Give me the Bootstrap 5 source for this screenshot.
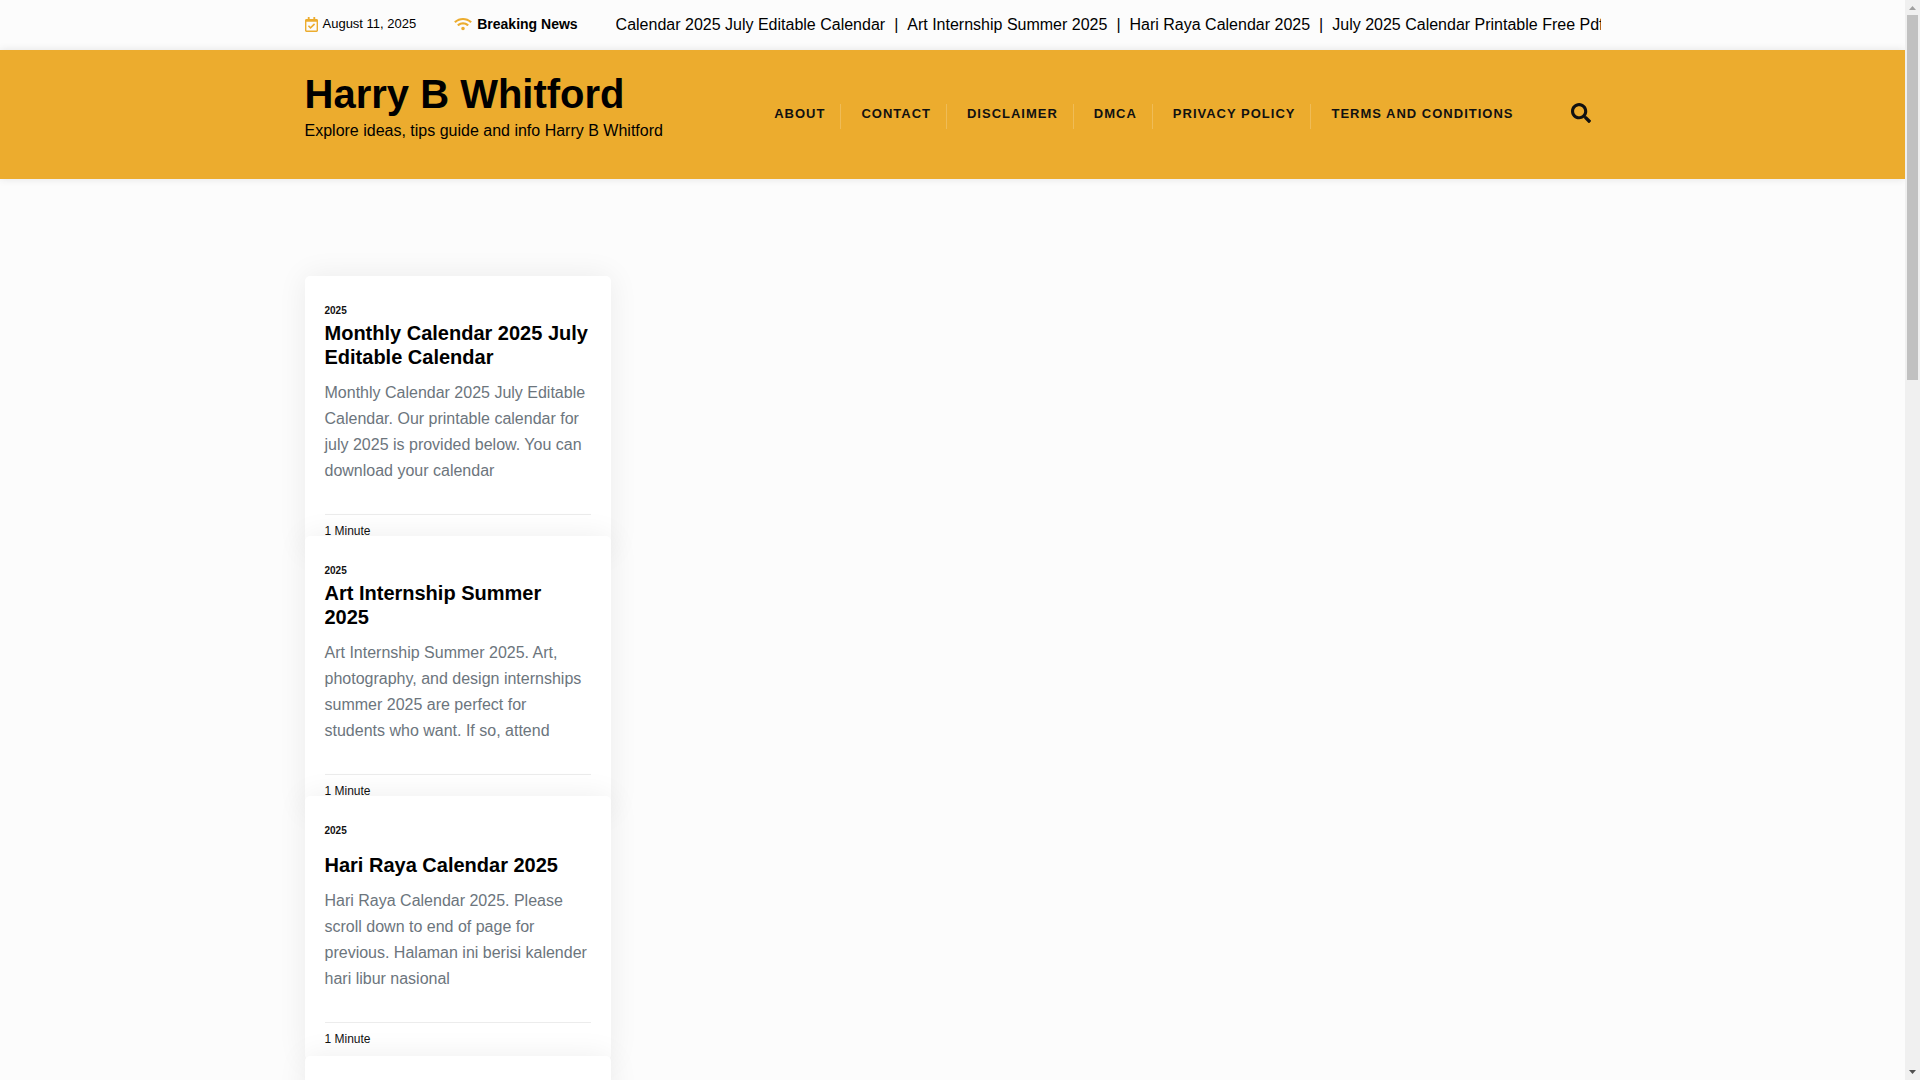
<!DOCTYPE html>
<html lang="en">
<head>
<meta charset="utf-8">
<meta name="viewport" content="width=device-width, initial-scale=1">
<title>Harry B Whitford</title>
<link href="https://cdn.jsdelivr.net/npm/bootstrap@5.3.0/dist/css/bootstrap.min.css" rel="stylesheet">
<style>
  :root { --brand: #ecac2e; }
  body { font-family: "Liberation Sans", Arial, sans-serif; font-size: 16px; color: #000; background: #fcfcfc; }
  a { color: inherit; text-decoration: none; }
  svg { display: block; fill: currentColor; flex: none; }
  .brand-color { color: var(--brand); }

  /* viewport: page on the left, scroll track on the right */
  .viewport { height: 100vh; overflow: hidden; }
  .page { min-width: 0; }
  .track { width: 15px; background: #f0f0f0; color: #505050; }
  .track .up { color: #a0a0a0; }
  .track .thumb { width: 11px; height: 33.8vh; background: #c1c1c1; }

  .topbar { height: 50px; }
  .date { font-size: 13px; line-height: 20px; gap: 5px; padding-bottom: 2px; }
  .breaking { font-size: 14px; line-height: 20px; gap: 5px; margin-left: 38px; padding-bottom: 2px; }
  .ticker { margin-left: 38px; min-width: 0; line-height: 24px; }
  .ticker a { margin-right: 9px; }
  .ticker a + a::before { content: "|"; margin-right: 9px; }

  .site-header { background: var(--brand); box-shadow: 0 0 8px rgba(0, 0, 0, .1); padding: 20px 0 35px; }
  .site-title { font-size: 40px; line-height: 48px; }
  .tagline { line-height: 26px; }
  .menu { gap: 20px; margin-right: 42px; padding-top: 34px; }
  .menu a { font-size: 13px; font-weight: 700; letter-spacing: 1px; line-height: 20px; color: #111; padding: 0 15px 5px 0; display: block; }
  .menu li:not(:last-child) { border-right: 1px solid rgba(255, 255, 255, .2); }
  .search { color: #111; padding: 33px 10px 0 0; }

  .posts { padding-top: 97px; }
  /* each slot is shorter than its card, so the next card laps over it */
  .slot { height: 260px; }
  .post { padding: 27px 20px 12px; min-height: 264px; border-radius: 5px; background: #fff; box-shadow: 0 0 30px rgba(0, 0, 0, .07); position: relative; }
  .cat { font-size: 10px; line-height: 16px; font-weight: 700; color: #111; }
  .post-title { font-size: 20px; line-height: 24px; min-height: 36px; margin: 2px 0 11px; }
  .excerpt { line-height: 26px; color: #6c757d; margin-bottom: 30px; }
  .meta { font-size: 12px; line-height: 18px; border-top: 1px solid #ececec; padding-top: 7px; color: #111; }
</style>
<script src="https://cdn.jsdelivr.net/npm/bootstrap@5.3.0/dist/js/bootstrap.bundle.min.js"></script>
</head>
<body>
<div class="viewport d-flex">
  <div class="page flex-grow-1">
    <div class="topbar">
      <div class="container d-flex align-items-center h-100">
        <div class="date d-flex align-items-center text-nowrap">
          <svg class="brand-color" width="13" height="15" viewBox="0 0 448 512" aria-hidden="true"><path d="M400 64h-48V12c0-6.627-5.373-12-12-12h-40c-6.627 0-12 5.373-12 12v52H160V12c0-6.627-5.373-12-12-12h-40c-6.627 0-12 5.373-12 12v52H48C21.49 64 0 85.49 0 112v352c0 26.51 21.49 48 48 48h352c26.51 0 48-21.49 48-48V112c0-26.51-21.49-48-48-48zm-6 400H54a6 6 0 0 1-6-6V160h352v298a6 6 0 0 1-6 6zm-52.849-200.65L198.842 404.519c-4.705 4.667-12.303 4.637-16.971-.068l-75.091-75.699c-4.667-4.705-4.637-12.303.068-16.971l22.719-22.536c4.705-4.667 12.303-4.637 16.97.069l44.104 44.461 111.072-110.181c4.705-4.667 12.303-4.637 16.971.068l22.536 22.718c4.667 4.705 4.636 12.303-.069 16.97z"/></svg>
          <span>August 11, 2025</span>
        </div>
        <div class="breaking d-flex align-items-center fw-bold text-nowrap">
          <svg class="brand-color" width="18" height="14" viewBox="0 0 640 512" aria-hidden="true"><path d="M634.91 154.88C457.74-8.99 182.19-8.93 5.09 154.88c-6.66 6.16-6.79 16.59-.35 22.98l34.24 33.97c6.14 6.1 16.02 6.23 22.4.38 145.92-133.68 371.3-133.71 517.25 0 6.38 5.85 16.26 5.71 22.4-.38l34.24-33.97c6.43-6.39 6.3-16.82-.36-22.98zM320 352c-35.35 0-64 28.65-64 64s28.65 64 64 64 64-28.65 64-64-28.65-64-64-64zm202.67-83.59c-115.26-101.93-290.21-101.82-405.34 0-6.9 6.1-7.12 16.69-.57 23.15l34.44 33.99c6 5.92 15.66 6.32 22.05.8 83.95-72.57 209.74-72.41 293.49 0 6.39 5.52 16.05 5.13 22.05-.8l34.44-33.99c6.56-6.46 6.33-17.06-.56-23.15z"/></svg>
          <span>Breaking News</span>
        </div>
        <div class="ticker d-flex flex-grow-1 overflow-hidden text-nowrap">
          <a href="#">Calendar 2025 July Editable Calendar</a><a href="#">Art Internship Summer 2025</a><a href="#">Hari Raya Calendar 2025</a><a href="#">July 2025 Calendar Printable Free Pdf</a>
        </div>
      </div>
    </div>

    <header class="site-header">
      <div class="container d-flex justify-content-between align-items-start">
        <div>
          <h1 class="site-title fw-bold m-0"><a href="#">Harry B Whitford</a></h1>
          <p class="tagline m-0">Explore ideas, tips guide and info Harry B Whitford</p>
        </div>
        <div class="d-flex align-items-start">
          <nav aria-label="Primary">
            <ul class="menu d-flex list-unstyled text-uppercase text-nowrap mb-0">
              <li><a href="#">About</a></li>
              <li><a href="#">Contact</a></li>
              <li><a href="#">Disclaimer</a></li>
              <li><a href="#">DMCA</a></li>
              <li><a href="#">Privacy Policy</a></li>
              <li><a href="#">Terms and Conditions</a></li>
            </ul>
          </nav>
          <button type="button" class="search border-0 bg-transparent" aria-label="Search">
            <svg width="20" height="20" viewBox="0 0 512 512" aria-hidden="true"><path d="M505 442.7L405.3 343c-4.5-4.5-10.6-7-17-7H372c27.6-35.3 44-79.7 44-128C416 93.1 322.9 0 208 0S0 93.1 0 208s93.1 208 208 208c48.3 0 92.7-16.4 128-44v16.3c0 6.4 2.5 12.5 7 17l99.7 99.7c9.4 9.4 24.6 9.4 33.9 0l28.3-28.3c9.4-9.4 9.4-24.6.1-34zM208 336c-70.7 0-128-57.2-128-128 0-70.7 57.2-128 128-128 70.7 0 128 57.2 128 128 0 70.7-57.2 128-128 128z"/></svg>
          </button>
        </div>
      </div>
    </header>

    <main class="container posts">
      <div class="row">
        <div class="col-lg-3">
          <div class="slot"><article class="post">
            <a class="cat d-block" href="#">2025</a>
            <h2 class="post-title fw-bold d-flex align-items-end"><a href="#">Monthly Calendar 2025 July Editable Calendar</a></h2>
            <p class="excerpt">Monthly Calendar 2025 July Editable Calendar. Our printable calendar for july 2025 is provided below. You can download your calendar</p>
            <div class="meta">1 Minute</div>
          </article></div>
          <div class="slot"><article class="post">
            <a class="cat d-block" href="#">2025</a>
            <h2 class="post-title fw-bold d-flex align-items-end"><a href="#">Art Internship Summer 2025</a></h2>
            <p class="excerpt">Art Internship Summer 2025. Art, photography, and design internships summer 2025 are perfect for students who want. If so, attend</p>
            <div class="meta">1 Minute</div>
          </article></div>
          <div class="slot"><article class="post">
            <a class="cat d-block" href="#">2025</a>
            <h2 class="post-title fw-bold d-flex align-items-end"><a href="#">Hari Raya Calendar 2025</a></h2>
            <p class="excerpt">Hari Raya Calendar 2025. Please scroll down to end of page for previous. Halaman ini berisi kalender hari libur nasional</p>
            <div class="meta">1 Minute</div>
          </article></div>
          <div class="slot"><article class="post"></article></div>
        </div>
      </div>
    </main>
  </div>

  <div class="track d-flex flex-column align-items-center flex-shrink-0" aria-hidden="true">
    <svg class="up" width="15" height="15" viewBox="0 0 15 15"><path d="M4 10h7L7.500 6z"/></svg>
    <div class="thumb"></div>
    <svg class="mt-auto" width="15" height="15" viewBox="0 0 15 15"><path d="M4 5h7L7.500 9z"/></svg>
  </div>
</div>
</body>
</html>
